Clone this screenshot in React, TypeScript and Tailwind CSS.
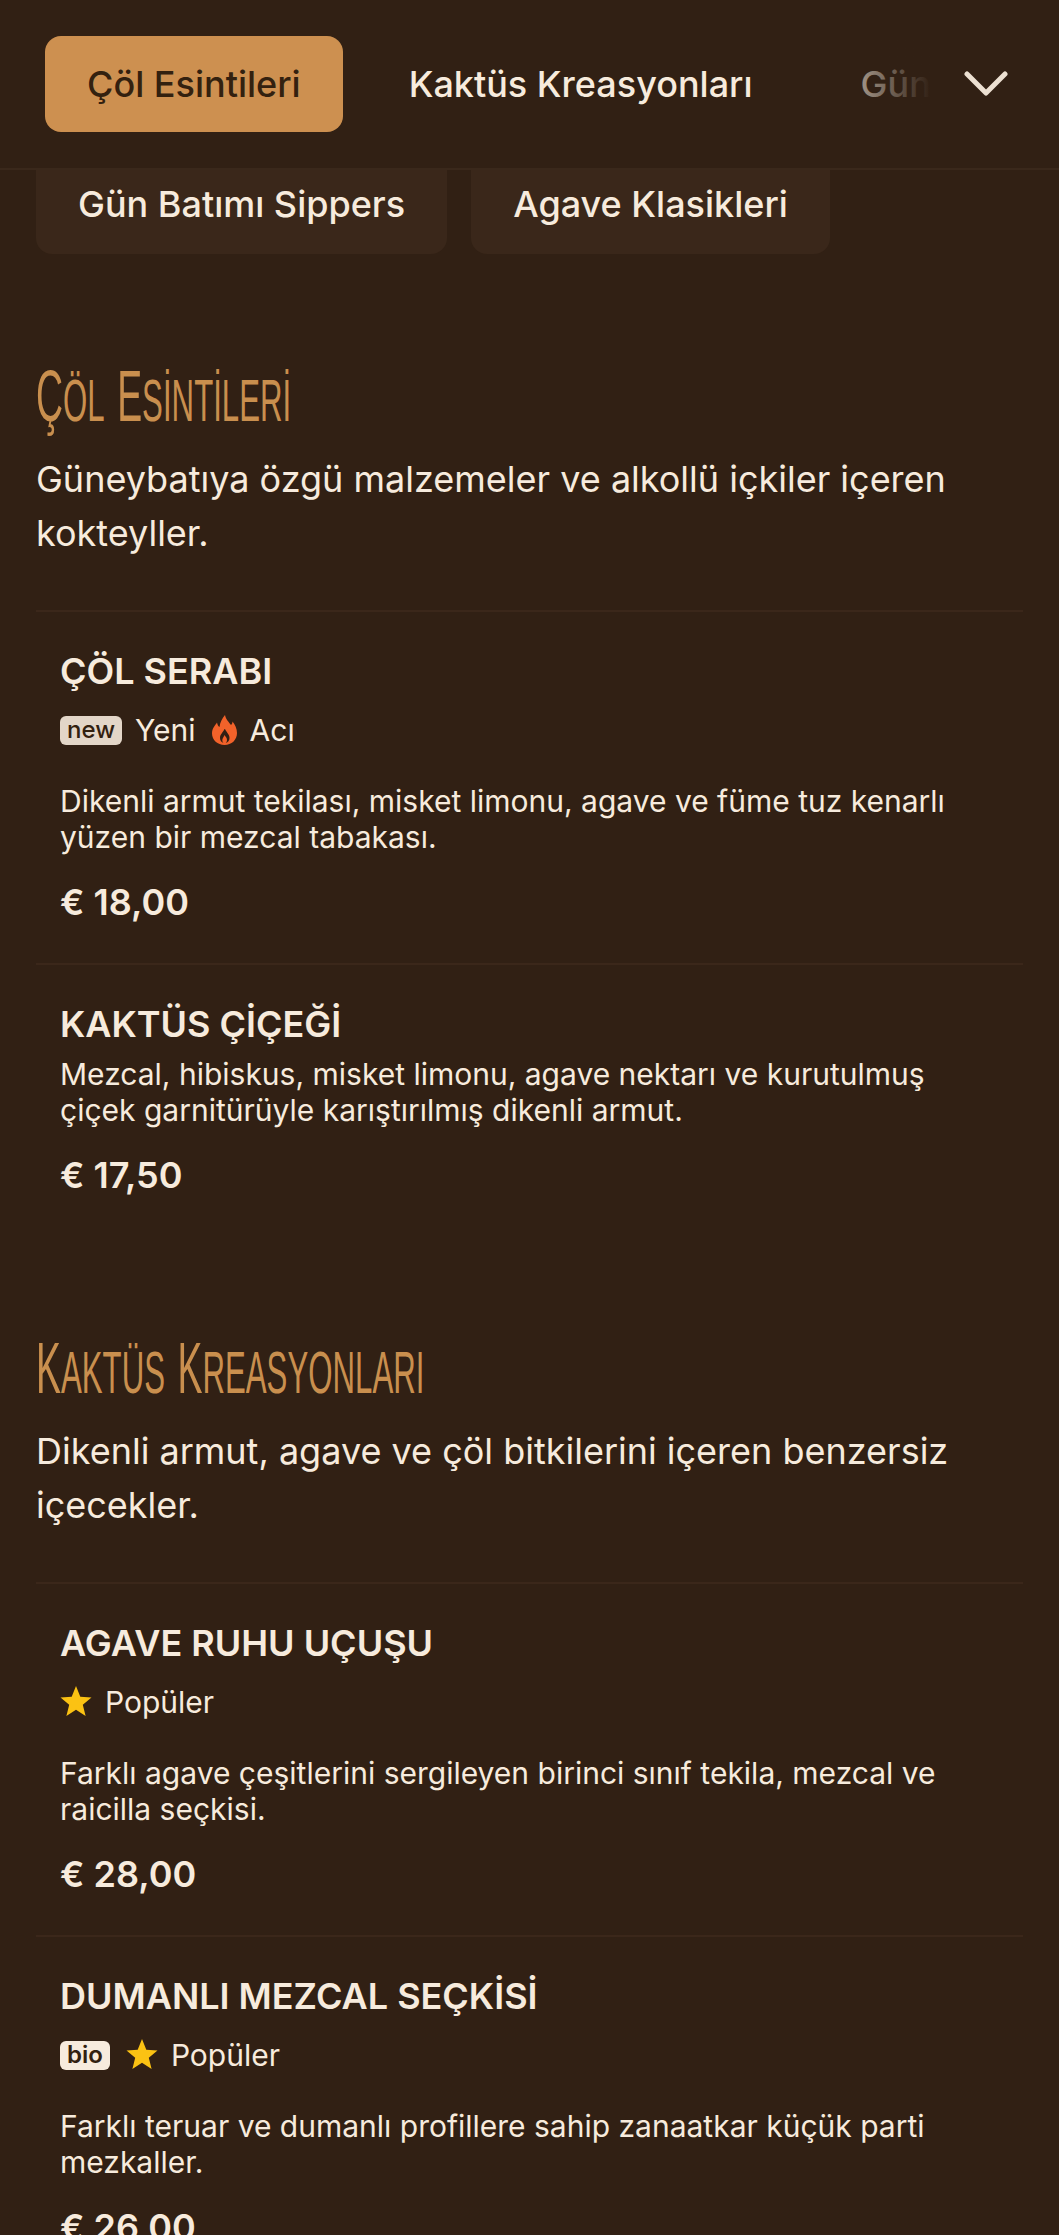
type Tag = { badge?: string; badgeLight?: boolean; kind?: "star" | "fire"; label?: string };

function Flame() {
    return <svg width="25" height="30" viewBox="0 0 25 30" className="shrink-0">
        <path fill="#f2622a" d="M13 0c1 5 4 7 6 10 1-1 1.500-2 1.500-3.500C23 9.500 25 13.500 25 18c0 7-5.500 12-12.500 12S0 25 0 18.500c0-5 3-8 5-11 .5 2 1 3.500 2.500 4.500C8 7.500 10 3.500 13 0zm-.5 14c-1 3-4.500 5-4.500 9 0 2.500 1.500 4.500 3.500 5-1-1-1.500-2.500-1-4 .5-1.500 1.500-2.500 2-4 1 1.500 2.500 3 2.500 5 0 1.200-.5 2.200-1.200 3 2.200-.6 3.700-2.600 3.700-5 0-4-3.500-6-4.500-9z" />
    </svg>;
}

function Star() {
    return <svg width="32" height="30" viewBox="0 0 32 30" className="shrink-0 -mt-[2px]">
        <polygon fill="#fbc213" points="16,0 20.300,10.800 31.500,11.500 22.800,18.800 25.600,30 16,23.800 6.400,30 9.200,18.800 0.500,11.500 11.700,10.800" />
    </svg>;
}

function Item(props: { name: string; tags?: Tag[]; text: string[]; price: string; last?: boolean }) {
    return <div className={`px-6 pt-[39px] ${props.last ? "" : "pb-[41px] border-b-2 border-[#3b271a]"}`}>
        <h3 className="text-[36px] leading-[40px] font-semibold text-[#f7ebdd]">{props.name}</h3>
        {props.tags && <div className="flex items-center gap-4 mt-[21px] mb-[35px] h-[36px] text-[30px] text-[#f7ebdd]">
            {props.tags.map((t, i) => <div key={i} className="flex items-center gap-[13px]">
                {t.badge && <span className={`px-[7px] h-[29px] rounded-[6px] text-[#32200f] text-[24px] leading-[27px] ${t.badgeLight ? "font-semibold bg-[#f7ebdd]" : "font-medium bg-[#e3d6c8]"}`}>{t.badge}</span>}
                {t.kind === "fire" && <Flame />}
                {t.kind === "star" && <Star />}
                {t.label && <span>{t.label}</span>}
            </div>)}
        </div>}
        <p className={`text-[30px] leading-[36px] text-[#f7ebdd] ${props.tags ? "" : "mt-[12px]"}`}>{props.text[0]}<br />{props.text[1]}</p>
        <div className="mt-[27px] text-[36px] leading-[40px] font-semibold text-[#f7ebdd]">{props.price}</div>
    </div>;
}

function Section(props: { title: string[]; desc: string[]; children: React.ReactNode }) {
    return <section className="px-9">
        <h2 lang="tr" className="flex gap-[24px] h-[84px] items-center origin-left scale-x-[.52] whitespace-nowrap font-['Liberation_Sans_Narrow','Liberation_Sans',sans-serif] uppercase text-[60px] leading-[84px] font-normal text-[#c98f4e]">
            {props.title.map(w => <span key={w} className="first-letter:text-[72px]">{w}</span>)}
        </h2>
        <p className="mt-[12px] text-[36px] leading-[54px] text-[#f7ebdd]">{props.desc[0]}<br />{props.desc[1]}</p>
        <div className="mt-[50px] border-t-2 border-[#3b271a]">{props.children}</div>
    </section>;
}

export default function App() {
    return <div className="font-['Inter','Noto_Sans',sans-serif] h-[2235px] overflow-hidden bg-[#312014]">
        <header className="h-[170px] flex items-center pl-[45px] pr-[51px] border-b-2 border-[#3a281b]">
            <div className="relative flex-1 overflow-hidden flex gap-6 items-center text-[36px] leading-[40px] font-medium whitespace-nowrap">
                <button className="h-[96px] px-[42px] rounded-[16px] bg-[#cd9050] text-[#33210f]">Çöl Esintileri</button>
                <button className="h-[96px] px-[42px] rounded-[16px] text-[#f7ebdd]">Kaktüs Kreasyonları</button>
                <button className="h-[96px] px-[42px] rounded-[16px] text-[#f7ebdd]">Gün Batımı Sippers</button>
                <div className="absolute right-0 top-0 bottom-0 w-[75px] bg-gradient-to-r from-[#31201466] to-[#312014]" />
            </div>
            <svg width="44" height="26" viewBox="0 0 44 26" fill="none" className="ml-[33px] shrink-0">
                <path d="M3 3l19 19L41 3" stroke="#ece0d2" strokeWidth="5" strokeLinecap="round" strokeLinejoin="round" />
            </svg>
        </header>

        <div className="flex gap-6 px-9 text-[36px] leading-[40px] font-medium text-[#f7ebdd]">
            <div className="h-[84px] pt-[14px] px-[42px] rounded-b-[16px] bg-[#3a271a]">Gün Batımı Sippers</div>
            <div className="h-[84px] pt-[14px] px-[42px] rounded-b-[16px] bg-[#3a271a]">Agave Klasikleri</div>
        </div>

        <div className="pt-[102px]">
            <Section title={["Çöl", "Esintileri"]} desc={["Güneybatıya özgü malzemeler ve alkollü içkiler içeren", "kokteyller."]}>
                <Item
                    name="ÇÖL SERABI"
                    tags={[{ badge: "new", label: "Yeni" }, { kind: "fire", label: "Acı" }]}
                    text={["Dikenli armut tekilası, misket limonu, agave ve füme tuz kenarlı", "yüzen bir mezcal tabakası."]}
                    price="€ 18,00"
                />
                <Item
                    name="KAKTÜS ÇİÇEĞİ"
                    text={["Mezcal, hibiskus, misket limonu, agave nektarı ve kurutulmuş", "çiçek garnitürüyle karıştırılmış dikenli armut."]}
                    price="€ 17,50"
                    last
                />
            </Section>
            <div className="h-[133px]" />
            <Section title={["Kaktüs", "Kreasyonları"]} desc={["Dikenli armut, agave ve çöl bitkilerini içeren benzersiz", "içecekler."]}>
                <Item
                    name="AGAVE RUHU UÇUŞU"
                    tags={[{ kind: "star", label: "Popüler" }]}
                    text={["Farklı agave çeşitlerini sergileyen birinci sınıf tekila, mezcal ve", "raicilla seçkisi."]}
                    price="€ 28,00"
                />
                <Item
                    name="DUMANLI MEZCAL SEÇKİSİ"
                    tags={[{ badge: "bio", badgeLight: true }, { kind: "star", label: "Popüler" }]}
                    text={["Farklı teruar ve dumanlı profillere sahip zanaatkar küçük parti", "mezkaller."]}
                    price="€ 26,00"
                    last
                />
            </Section>
        </div>
    </div>;
}
